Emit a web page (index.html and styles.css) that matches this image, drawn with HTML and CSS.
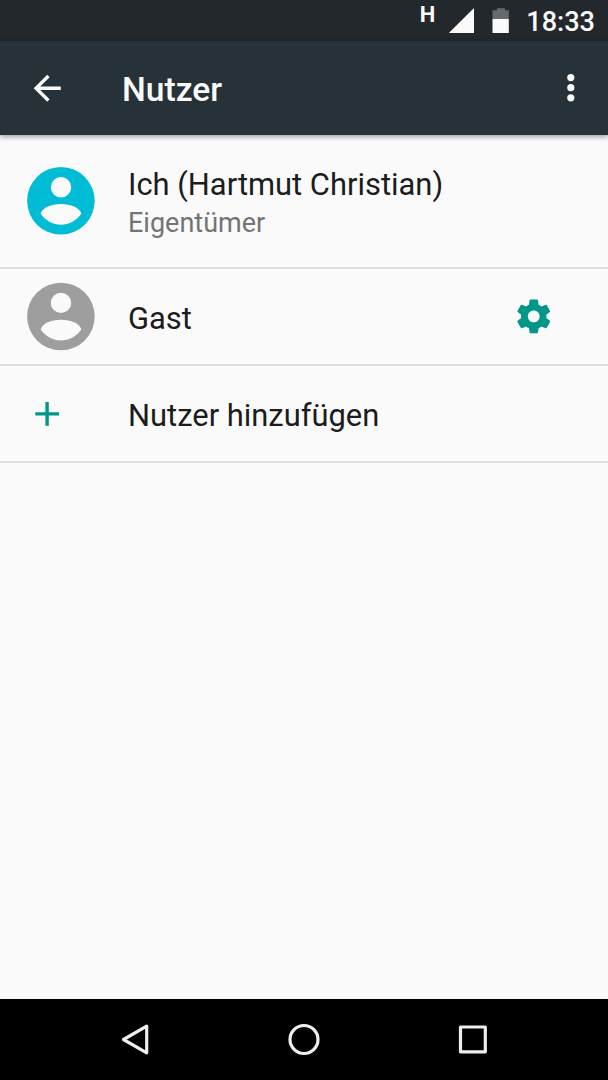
FILE: index.html
```html
<!DOCTYPE html>
<html lang="de">
<head>
<meta charset="utf-8">
<title>Nutzer</title>
<link rel="stylesheet" href="styles.css">
</head>
<body>
<div class="screen">
  <div class="status">
    <span class="network">H</span>
    <svg class="signal" width="26" height="26" viewBox="0 0 26 26"><path d="M.8 25H26V0z"/></svg>
    <svg class="battery" width="18" height="26" viewBox="0 0 18 26"><path class="empty" d="M5 .2h8V2.2h3.800V11H.5V2.200H5z"/><path d="M.5 11h16.300v14H.5z"/></svg>
    <span class="clock">18:33</span>
  </div>
  <header class="toolbar">
    <svg class="back" width="41" height="41" viewBox="0 0 24.3 24.3"><path d="M20 11H7.830l5.590-5.590L12 4l-8 8 8 8 1.410-1.410L7.830 13H20v-2z"/></svg>
    <h1 class="title">Nutzer</h1>
    <svg class="more" width="8" height="30" viewBox="0 0 8 30"><circle cx="3.800" cy="4.600" r="3.600"/><circle cx="3.800" cy="14.700" r="3.600"/><circle cx="3.800" cy="24.800" r="3.600"/></svg>
  </header>
  <main class="list">
    <div class="row owner">
      <div class="lead"><svg class="avatar" width="70" height="70" viewBox="0 0 70 70"><circle cx="34.900" cy="34.800" r="33.800"/><circle class="cut" cx="35" cy="21.200" r="10.200"/><path class="cut" d="M14.600 47.500C17 41.500 25 38 35 38s18 3.500 20.400 9.500C51 54.500 43 58.700 35 58.700S19 54.500 14.600 47.500z"/></svg></div>
      <div class="labels">
        <div class="name">Ich (Hartmut Christian)</div>
        <div class="summary">Eigentümer</div>
      </div>
    </div>
    <div class="row guest">
      <div class="lead"><svg class="avatar" width="70" height="70" viewBox="0 0 70 70"><circle cx="34.900" cy="34.500" r="33.800"/><circle class="cut" cx="35" cy="20.900" r="10.200"/><path class="cut" d="M14.600 47.200C17 41.200 25 37.700 35 37.700s18 3.500 20.400 9.500C51 54.200 43 58.400 35 58.400S19 54.200 14.600 47.200z"/></svg></div>
      <div class="name">Gast</div>
      <svg class="gear" width="41" height="41" viewBox="-.3 -.1 24.3 24.3"><path d="M19.430 12.980c.04-.32.07-.64.07-.98s-.03-.66-.07-.98l2.110-1.650c.19-.15.24-.42.12-.64l-2-3.460c-.12-.22-.39-.3-.61-.22l-2.490 1c-.52-.4-1.080-.73-1.690-.98l-.38-2.650C14.460 2.180 14.250 2 14 2h-4c-.25 0-.46.18-.49.42l-.38 2.650c-.61.25-1.170.59-1.690.98l-2.490-1c-.23-.09-.49 0-.61.22l-2 3.460c-.13.22-.07.49.12.64l2.110 1.650c-.04.32-.07.65-.07.98s.03.66.07.98l-2.110 1.650c-.19.15-.24.42-.12.64l2 3.460c.12.22.39.3.61.22l2.490-1c.52.4 1.080.73 1.690.98l.38 2.650c.03.24.24.42.49.42h4c.25 0 .46-.18.49-.42l.38-2.650c.61-.25 1.170-.59 1.690-.98l2.490 1c.23.09.49 0 .61-.22l2-3.460c.12-.22.07-.49-.12-.64l-2.110-1.650zM12 15.500c-1.930 0-3.500-1.570-3.500-3.500s1.570-3.500 3.500-3.500 3.500 1.570 3.500 3.500-1.570 3.500-3.500 3.500z"/></svg>
    </div>
    <div class="row add">
      <div class="lead"><svg class="plus" width="42" height="42" viewBox="0 0 42 42"><path d="M9.300 20.900H33M21.100 9V32.800"/></svg></div>
      <div class="name">Nutzer hinzufügen</div>
    </div>
  </main>
  <nav class="navbar">
    <svg width="34" height="34" viewBox="0 0 34 34"><path d="M5.500 16.500 28.700 3.200V29.800z"/></svg>
    <svg width="34" height="34" viewBox="0 0 34 34"><circle cx="17" cy="16.500" r="14"/></svg>
    <svg width="34" height="34" viewBox="0 0 34 34"><rect x="4.500" y="4" width="24.800" height="24.800"/></svg>
  </nav>
</div>
</body>
</html>
```
FILE: styles.css
```css
body {
  margin: 0;
}

.screen {
  display: flex;
  flex-direction: column;
  width: 608px;
  height: 1080px;
  overflow: hidden;
  background: #fafafa;
  color: #1c1c1c;
  font-family: Roboto, "Noto Sans", sans-serif;
}

svg {
  display: block;
  flex: none;
}

.status {
  display: flex;
  justify-content: flex-end;
  box-sizing: border-box;
  height: 41px;
  padding-right: 13px;
  background: #22282c;
  color: #fafafa;
  fill: #fafafa;
}

.network {
  margin-right: 13px;
  padding-top: 4px;
  font-size: 22px;
  line-height: 21px;
  font-weight: 700;
}

.signal,
.battery {
  margin-top: 8px;
}

.battery {
  margin: 8px 16px 0 18px;
}

.empty {
  fill: #656a6c;
}

.clock {
  font-size: 27.1px;
  line-height: 44px;
  font-weight: 500;
}

.toolbar {
  display: flex;
  align-items: center;
  flex: none;
  box-sizing: border-box;
  height: 94px;
  padding: 0 33px 0 27px;
  background: #263238;
  color: #fafafa;
  fill: #fafafa;
  box-shadow: 0 2px 5px rgba(0, 0, 0, 0.36);
}

.title {
  flex: 1;
  margin: 0 0 0 54px;
  padding-top: 4px;
  font-size: 33.6px;
  line-height: 40px;
  font-weight: 500;
}

.list {
  flex: 1;
}

.row {
  display: flex;
  align-items: center;
  box-sizing: border-box;
  height: 97px;
  padding-left: 26px;
  border-bottom: 2px solid #dedede;
}

.owner {
  align-items: flex-start;
  height: 134px;
  padding-top: 31px;
}

.lead {
  flex: none;
  width: 102px;
}

.owner .avatar {
  fill: #00bcd4;
}

.guest .avatar {
  fill: #9e9e9e;
}

.avatar .cut {
  fill: #fafafa;
}

.name {
  font-size: 30.9px;
  line-height: 38px;
}

.guest .name,
.add .name {
  flex: 1;
  padding-top: 5px;
}

.summary {
  color: #747474;
  font-size: 27px;
  line-height: 38px;
}

.gear {
  margin-right: 54px;
  fill: #009688;
}

.plus {
  fill: none;
  stroke: #009688;
  stroke-width: 3.4;
}

.navbar {
  display: flex;
  justify-content: space-between;
  align-items: center;
  height: 81px;
  padding: 0 118px;
  background: #000;
  fill: none;
  stroke: #eee;
  stroke-width: 3.2;
  stroke-linejoin: round;
}
```
